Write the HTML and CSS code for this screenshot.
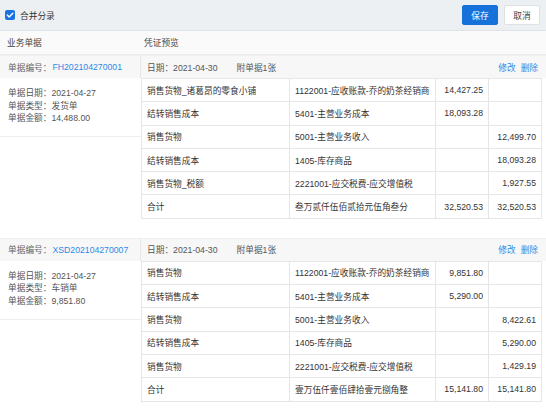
FILE: index.html
```html
<!DOCTYPE html>
<html lang="zh-CN">
<head>
    <meta charset="UTF-8">
    <title>凭证预览</title>
    <link rel="stylesheet" href="styles.css">
</head>
<body>
    <div class="toolbar">
        <label class="merge">
            <span class="check">
                <svg width="8" height="8" viewBox="0 0 8 8"><path d="M1.3 4.1 L3.2 6 L6.8 2.2" fill="none" stroke="#fff" stroke-width="1.4" stroke-linecap="round" stroke-linejoin="round"/></svg>
            </span>
            合并分录
        </label>
        <div class="actions">
            <button class="btn btn-primary">保存</button>
            <button class="btn">取消</button>
        </div>
    </div>

    <div class="list">
        <div class="list-inner">
            <div class="list-head">
                <div class="head-doc">业务单据</div>
                <div class="head-voucher">凭证预览</div>
            </div>

            <div class="group">
                <div class="group-head">
                    <div class="doc-no">单据编号：<a href="#">FH202104270001</a></div>
                    <div class="voucher-meta">
                        <span class="meta-date">日期：2021-04-30</span>
                        <span class="meta-att">附单据1张</span>
                        <span class="ops"><a href="#">修改</a><a href="#">删除</a></span>
                    </div>
                </div>
                <div class="group-body">
                    <div class="doc-info">
                        <p>单据日期：2021-04-27</p>
                        <p>单据类型：发货单</p>
                        <p>单据金额：14,488.00</p>
                    </div>
                    <table class="entries">
                        <colgroup><col class="c-sum"><col class="c-acc"><col class="c-amt"><col class="c-amt"></colgroup>
                        <tr><td>销售货物_诸葛昂的零食小铺</td><td>1122001-应收账款-乔的奶茶经销商</td><td class="num">14,427.25</td><td class="num"></td></tr>
                        <tr><td>结转销售成本</td><td>5401-主营业务成本</td><td class="num">18,093.28</td><td class="num"></td></tr>
                        <tr><td>销售货物</td><td>5001-主营业务收入</td><td class="num"></td><td class="num">12,499.70</td></tr>
                        <tr><td>结转销售成本</td><td>1405-库存商品</td><td class="num"></td><td class="num">18,093.28</td></tr>
                        <tr><td>销售货物_税额</td><td>2221001-应交税费-应交增值税</td><td class="num"></td><td class="num">1,927.55</td></tr>
                        <tr><td>合计</td><td>叁万贰仟伍佰贰拾元伍角叁分</td><td class="num">32,520.53</td><td class="num">32,520.53</td></tr>
                    </table>
                </div>
            </div>

            <div class="group">
                <div class="group-head">
                    <div class="doc-no">单据编号：<a href="#">XSD202104270007</a></div>
                    <div class="voucher-meta">
                        <span class="meta-date">日期：2021-04-30</span>
                        <span class="meta-att">附单据1张</span>
                        <span class="ops"><a href="#">修改</a><a href="#">删除</a></span>
                    </div>
                </div>
                <div class="group-body">
                    <div class="doc-info">
                        <p>单据日期：2021-04-27</p>
                        <p>单据类型：车销单</p>
                        <p>单据金额：9,851.80</p>
                    </div>
                    <table class="entries">
                        <colgroup><col class="c-sum"><col class="c-acc"><col class="c-amt"><col class="c-amt"></colgroup>
                        <tr><td>销售货物</td><td>1122001-应收账款-乔的奶茶经销商</td><td class="num">9,851.80</td><td class="num"></td></tr>
                        <tr><td>结转销售成本</td><td>5401-主营业务成本</td><td class="num">5,290.00</td><td class="num"></td></tr>
                        <tr><td>销售货物</td><td>5001-主营业务收入</td><td class="num"></td><td class="num">8,422.61</td></tr>
                        <tr><td>结转销售成本</td><td>1405-库存商品</td><td class="num"></td><td class="num">5,290.00</td></tr>
                        <tr><td>销售货物</td><td>2221001-应交税费-应交增值税</td><td class="num"></td><td class="num">1,429.19</td></tr>
                        <tr><td>合计</td><td>壹万伍仟壹佰肆拾壹元捌角整</td><td class="num">15,141.80</td><td class="num">15,141.80</td></tr>
                    </table>
                </div>
            </div>
        </div>
    </div>
</body>
</html>
```

FILE: styles.css
```css
body {
    margin: 0;
    font-family: "Liberation Sans", "Noto Sans CJK SC", sans-serif;
    font-size: 8.7px;
    color: #333;
    background: #fff;
}
p {
    margin: 0;
}
a {
    color: #2d8ae8;
    text-decoration: none;
}
.toolbar {
    height: 30px;
    display: flex;
    align-items: center;
    justify-content: space-between;
    padding: 0 6px 0 5px;
    background: #edf0f2;
    border-bottom: 1px solid #dfe3e6;
}
.merge {
    display: flex;
    align-items: center;
    gap: 5px;
    color: #333;
}
.check {
    width: 10px;
    height: 10px;
    border-radius: 2px;
    background: #1a73e0;
    display: flex;
    align-items: center;
    justify-content: center;
}
.check svg {
    display: block;
}
.actions {
    display: flex;
    gap: 6px;
}
.btn {
    width: 36px;
    height: 20px;
    padding: 0;
    font: inherit;
    color: #444;
    background: #fff;
    border: 1px solid #dde1e4;
    border-radius: 2px;
}
.btn-primary {
    color: #fff;
    background: #1672da;
    border-color: #1672da;
}
.list {
    height: 378px;
    overflow-y: scroll;
}
.list::-webkit-scrollbar {
    width: 5px;
}
.list::-webkit-scrollbar-track {
    background: #f3f3f3;
}
.list::-webkit-scrollbar-thumb {
    background: #c4c4c4;
}
.list-inner {
    padding-bottom: 430px;
}
.list-head {
    height: 23px;
    display: grid;
    grid-template-columns: 142px 1fr;
    align-items: center;
    background: #fafafa;
    border-bottom: 1px solid #ececec;
    color: #444;
}
.head-doc {
    padding-left: 7px;
}
.head-voucher {
    padding-left: 2px;
}
.group {
    margin-bottom: 19px;
}
.group-head {
    height: 22px;
    display: grid;
    grid-template-columns: 141px 1fr;
    background: #f7f7f7;
    border-top: 1px solid #efefef;
}
.doc-no {
    display: flex;
    align-items: center;
    padding-left: 8px;
    color: #666;
    border-right: 1px solid #e6e6e6;
}
.doc-no a {
    margin-left: 1px;
}
.voucher-meta {
    display: flex;
    align-items: center;
    padding: 0 8px 0 6px;
    color: #555;
}
.meta-att {
    margin-left: 19px;
}
.ops {
    margin-left: auto;
    display: flex;
    gap: 5px;
}
.group-body {
    display: flex;
    align-items: flex-start;
}
.doc-info {
    width: 125px;
    padding: 9px 8px 11px;
    line-height: 12.6px;
    color: #555;
    border-bottom: 1px solid #eee;
}
.entries {
    width: 400px;
    border-collapse: collapse;
    table-layout: fixed;
}
.entries td {
    height: 22.3px;
    padding: 0 5px;
    border: 1px solid #e6e6e6;
    white-space: nowrap;
    overflow: hidden;
}
.entries .num {
    text-align: right;
    padding: 0 5px;
}
.c-sum {
    width: 148px;
}
.c-acc {
    width: 146px;
}
.c-amt {
    width: 53px;
}
```
